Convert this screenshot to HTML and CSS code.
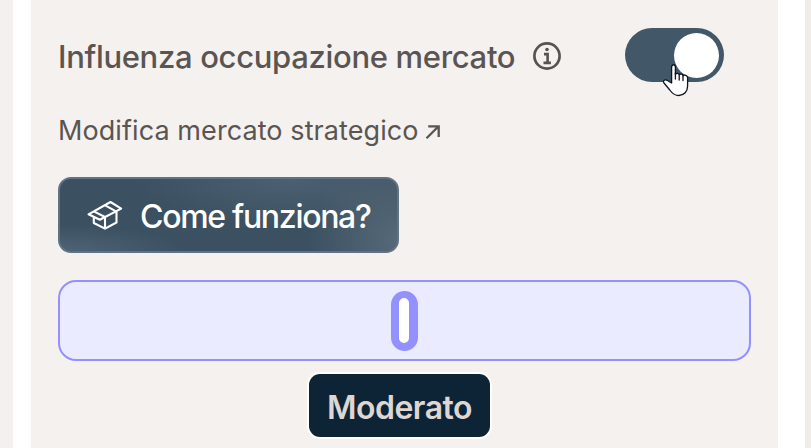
FILE: index.html
```
<!DOCTYPE html>
<html lang="it">
<head>
    <meta charset="UTF-8">
    <meta name="viewport" content="width=device-width, initial-scale=1.0">
    <title>Influenza occupazione mercato</title>
    <link rel="stylesheet" href="styles.css">
</head>
<body>
    <div class="page">
        <main class="panel">
            <div class="setting">
                <h1 class="setting-title">Influenza occupazione mercato</h1>
                <svg class="info-icon" viewBox="0 0 28 28" fill="none" stroke="currentColor">
                    <circle cx="14" cy="14" r="12.6" stroke-width="2.7"/>
                    <path d="M11 12.1h3.6v8.4M10.5 20.9h7.4" stroke-width="2.6"/>
                    <circle cx="14" cy="7.5" r="1.8" fill="currentColor" stroke="none"/>
                </svg>
                <div class="toggle" role="switch" aria-checked="true">
                    <span class="toggle-knob"></span>
                    <svg class="cursor" viewBox="0 0 27 34">
                        <path d="M9.6 20V4.2C9.6 .9 13.4 .9 13.4 4.2V11.2C14.8 9.7 17 10.2 17.2 11.7C18.7 10.6 20.8 11.2 21 12.6C22.6 11.7 25.6 12.3 25.6 14.8V23C25.6 28.5 22 32.5 16.8 32.5C12.6 32.5 10.2 30.4 7.8 27L2 20C.3 17.6 3.2 16 5.5 17.5Z" fill="#fff" stroke="#12121f" stroke-width="1.3" stroke-linejoin="round"/>
                        <path d="M13.4 10V16M17.2 11.5V17M21 12.5V17.5" fill="none" stroke="#12121f" stroke-width="1.3" stroke-linecap="round"/>
                    </svg>
                </div>
            </div>

            <a class="link">
                <span class="link-text">Modifica mercato strategico</span>
                <svg class="link-arrow" viewBox="0 0 16 16" fill="none" stroke="currentColor" stroke-width="2.3">
                    <path d="M1.5 14.3L13.3 2.5M3.2 2.3h10.5v10.6"/>
                </svg>
            </a>

            <button class="how-button">
                <svg class="box-icon" viewBox="0 0 36 30" fill="none" stroke="currentColor" stroke-width="2.1" stroke-linejoin="round">
                    <path d="M1.5 14.3L23.5 2L34.2 8.6L12.8 19.8Z"/>
                    <path d="M6.8 11.4L18 17M17.8 5.2L29 11.3"/>
                    <path d="M6.8 17.5V23L18 28.6L29.5 22.5V11.5M18 17V28.6"/>
                </svg>
                <span class="how-text">Come funziona?</span>
            </button>

            <div class="slider">
                <span class="slider-handle"><span class="slider-grip"></span></span>
            </div>

            <div class="level"><span class="level-text">Moderato</span></div>
        </main>
    </div>
</body>
</html>
```
FILE: styles.css
```
* {
    box-sizing: border-box;
}

body {
    margin: 0;
    background: #fff;
    font-family: "Inter", "Liberation Sans", sans-serif;
    color: #5a5552;
}

.page {
    display: flex;
    width: 811px;
    height: 448px;
    padding: 0 27px 0 18px;
    border-left: 13px solid #f4f0ed;
    border-right: 6px solid #f1ece8;
    overflow: hidden;
}

.panel {
    flex: 1;
    display: flex;
    flex-direction: column;
    align-items: flex-start;
    padding: 28px 27px 0;
    background: #f5f1ee;
}

.setting {
    display: flex;
    align-items: center;
    align-self: stretch;
    height: 54px;
}

.setting-title {
    width: 475px;
    margin: 3px 0 0;
    font-size: 31px;
    font-weight: 500;
    line-height: 40px;
    letter-spacing: -0.32px;
    white-space: nowrap;
}

.info-icon {
    width: 28px;
    height: 28px;
    margin-top: 1px;
    color: #57534e;
}

.toggle {
    position: relative;
    display: flex;
    justify-content: flex-end;
    width: 99px;
    height: 54px;
    margin-left: 64px;
    padding: 5px;
    border-radius: 27px;
    background: #425768;
}

.toggle-knob {
    width: 45px;
    height: 45px;
    border-radius: 50%;
    background: #fff;
}

.cursor {
    position: absolute;
    left: 37px;
    top: 35px;
    width: 27px;
    height: 34px;
}

.link {
    display: flex;
    align-items: center;
    height: 36px;
    margin-top: 30px;
    color: #5a5552;
}

.link-text {
    width: 367px;
    font-size: 27px;
    letter-spacing: 0.08px;
    white-space: nowrap;
}

.link-arrow {
    width: 16px;
    height: 16px;
    margin-top: 4px;
}

.how-button {
    display: flex;
    align-items: center;
    width: 341px;
    height: 76px;
    margin-top: 29px;
    padding: 0 0 0 27px;
    border: 2px solid #5e7384;
    border-radius: 13px;
    background:
        radial-gradient(circle at 100% 85%, #566978 0, transparent 26%),
        radial-gradient(ellipse at 68% 0, #4b6070 0, transparent 48%),
        radial-gradient(ellipse at 0 100%, #4e6373 0, transparent 26%),
        #3b5061;
    color: #fff;
    font-family: inherit;
}

.box-icon {
    width: 36px;
    height: 30px;
}

.how-text {
    margin: 2px 0 0 17px;
    font-size: 32px;
    font-weight: 500;
    letter-spacing: -1.3px;
    white-space: nowrap;
}

.slider {
    display: flex;
    align-items: center;
    justify-content: center;
    align-self: stretch;
    height: 81px;
    margin-top: 27px;
    border: 2px solid #9391ff;
    border-radius: 18px;
    background: #eaebff;
}

.slider-handle {
    display: flex;
    align-items: center;
    justify-content: center;
    width: 27px;
    height: 60px;
    border-radius: 14px;
    background: #9391ff;
}

.slider-grip {
    width: 10px;
    height: 45px;
    margin-right: 1px;
    border-radius: 5px;
    background: #fff;
}

.level {
    display: flex;
    align-items: center;
    justify-content: center;
    width: 181px;
    height: 63px;
    margin: 13px 0 0 251px;
    border-radius: 11px;
    background: #0c2436;
    box-shadow: 0 0 0 2px #fff;
    color: #ded6d2;
}

.level-text {
    margin-top: 3px;
    font-size: 32px;
    font-weight: 600;
    letter-spacing: -0.5px;
}
```
